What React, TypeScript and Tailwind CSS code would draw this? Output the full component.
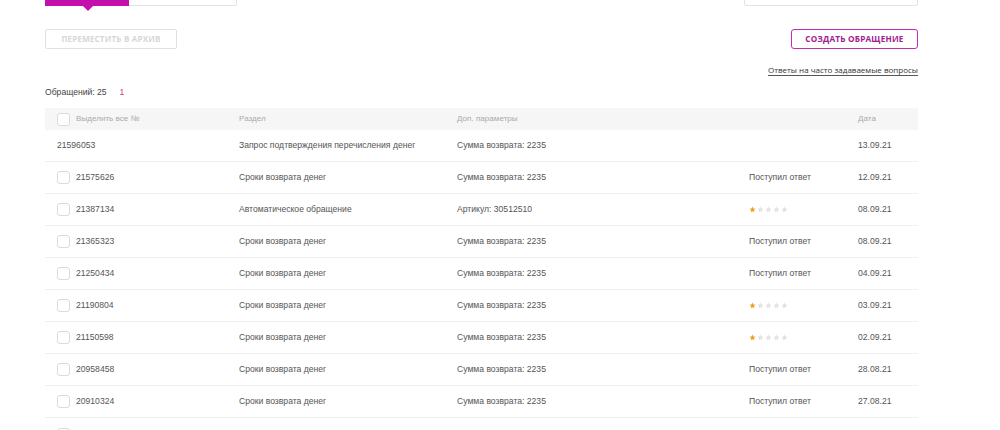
import React from "react";

interface IRow {
    id: string;
    section: string;
    params: string;
    status?: string;
    rating?: number;
    date: string;
    noCheckbox?: boolean;
}

const rows: IRow[] = [
    { id: "21596053", section: "Запрос подтверждения перечисления денег", params: "Сумма возврата: 2235", date: "13.09.21", noCheckbox: true },
    { id: "21575626", section: "Сроки возврата денег", params: "Сумма возврата: 2235", status: "Поступил ответ", date: "12.09.21" },
    { id: "21387134", section: "Автоматическое обращение", params: "Артикул: 30512510", rating: 1, date: "08.09.21" },
    { id: "21365323", section: "Сроки возврата денег", params: "Сумма возврата: 2235", status: "Поступил ответ", date: "08.09.21" },
    { id: "21250434", section: "Сроки возврата денег", params: "Сумма возврата: 2235", status: "Поступил ответ", date: "04.09.21" },
    { id: "21190804", section: "Сроки возврата денег", params: "Сумма возврата: 2235", rating: 1, date: "03.09.21" },
    { id: "21150598", section: "Сроки возврата денег", params: "Сумма возврата: 2235", rating: 1, date: "02.09.21" },
    { id: "20958458", section: "Сроки возврата денег", params: "Сумма возврата: 2235", status: "Поступил ответ", date: "28.08.21" },
    { id: "20910324", section: "Сроки возврата денег", params: "Сумма возврата: 2235", status: "Поступил ответ", date: "27.08.21" },
];

const grid = "grid grid-cols-[182px_218px_292px_109px_1fr] items-center pl-3";

function Checkbox() {
    return <span className="inline-block w-[13px] h-[13px] border border-[#dcdcdc] rounded-[3px] bg-white mr-[6px] shrink-0" />;
}

function Star({ filled }: { filled: boolean }) {
    return (
        <svg width="7" height="7" viewBox="0 0 24 24" className="mr-[1px]">
            <path
                d="M12 2l2.9 6.9 7.1.6-5.4 4.7 1.6 7.3L12 17.8 5.8 21.5l1.6-7.3L2 9.5l7.1-.6z"
                fill={filled ? "#f0a020" : "#e2e2e2"}
            />
        </svg>
    );
}

function Rating({ value }: { value: number }) {
    return (
        <div className="flex items-center">
            {[1, 2, 3, 4, 5].map((i) => (
                <Star key={`star-${i}`} filled={i <= value} />
            ))}
        </div>
    );
}

export default function App() {
    return (
        <div className="w-[1000px] h-[430px] overflow-hidden bg-white font-['Liberation_Sans',Arial,sans-serif] text-[#555]">
            <div className="pl-[45px] pr-[82px] -mt-[34px]">
                {/* tabs + search */}
                <div className="flex justify-between items-start">
                    <div className="flex">
                        <div className="relative w-[84px] h-[40px] bg-[#c40fae]">
                            <span className="absolute left-[38px] -bottom-[5px] w-0 h-0 border-l-[5px] border-r-[5px] border-t-[5px] border-l-transparent border-r-transparent border-t-[#c40fae]" />
                        </div>
                        <div className="w-[108px] h-[40px] border border-[#e3e3e3] border-l-0 rounded-r-[2px]" />
                    </div>
                    <div className="w-[174px] h-[40px] border border-[#e3e3e3] rounded-[2px]" />
                </div>

                {/* buttons */}
                <div className="flex justify-between mt-[23px]">
                    <button className="w-[132px] h-[20px] border border-[#e0e0e0] rounded-[2px] text-[8px] font-bold text-[#d6d6d6] font-['Open_Sans',sans-serif] tracking-[0.2px]">
                        ПЕРЕМЕСТИТЬ В АРХИВ
                    </button>
                    <button className="w-[127px] h-[20px] border-[1.5px] border-[#c22fae] rounded-[3px] text-[8.2px] font-bold text-[#a0208f] font-['Open_Sans',sans-serif] tracking-[0.2px]">
                        СОЗДАТЬ ОБРАЩЕНИЕ
                    </button>
                </div>

                <div className="flex justify-end mt-[15px]">
                    <a className="text-[8px] text-[#333] border-b border-[#555] leading-[11px] font-['Open_Sans',sans-serif]">
                        Ответы на часто задаваемые вопросы
                    </a>
                </div>

                <div className="flex items-center mt-[10px] text-[8.6px] text-[#444] h-[12px]">
                    <span>Обращений: 25</span>
                    <span className="ml-[13px] text-[#d0437a]">1</span>
                </div>

                {/* table */}
                <div className="mt-[10px]">
                    <div className={`${grid} h-[22px] bg-[#f6f6f6] text-[8.1px] text-[#aaa]`}>
                        <div className="flex items-center">
                            <Checkbox />
                            <span>Выделить все №</span>
                        </div>
                        <div>Раздел</div>
                        <div>Доп. параметры</div>
                        <div />
                        <div>Дата</div>
                    </div>
                    {rows.map((row) => (
                        <div key={row.id} className={`${grid} h-[32px] border-b border-[#efefef] text-[8.6px] text-[#555]`}>
                            <div className="flex items-center">
                                {!row.noCheckbox && <Checkbox />}
                                <span>{row.id}</span>
                            </div>
                            <div>{row.section}</div>
                            <div>{row.params}</div>
                            <div>{row.rating ? <Rating value={row.rating} /> : row.status}</div>
                            <div>{row.date}</div>
                        </div>
                    ))}
                    <div className={`${grid} h-[32px]`}>
                        <div className="flex items-center">
                            <Checkbox />
                        </div>
                    </div>
                </div>
            </div>
        </div>
    );
}
